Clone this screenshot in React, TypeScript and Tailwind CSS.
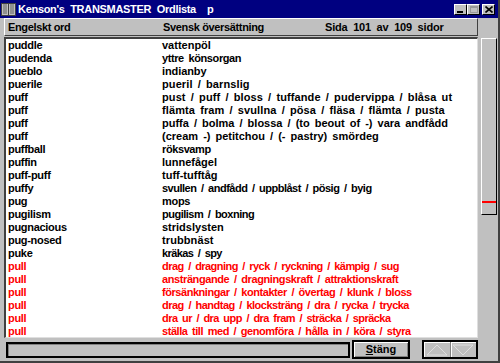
import React from "react";

type Row = { en: string; sv: string; fit: string; hit?: boolean };

// fit = letter-spacing so each line ends where the original bitmap font ends
const rows: Row[] = [
  { en: "puddle", sv: "vattenpöl", fit: "tracking-[0px]" },
  { en: "pudenda", sv: "yttre könsorgan", fit: "tracking-[-0.4px]" },
  { en: "pueblo", sv: "indianby", fit: "tracking-[-0.1px]" },
  { en: "puerile", sv: "pueril / barnslig", fit: "tracking-[0.1px]" },
  { en: "puff", sv: "pust / puff / bloss / tuffande / pudervippa / blåsa ut", fit: "tracking-[0.1px]" },
  { en: "puff", sv: "flämta fram / svullna / pösa / fläsa / flämta / pusta", fit: "tracking-[0.1px]" },
  { en: "puff", sv: "puffa / bolma / blossa / (to beout of -) vara andfådd", fit: "tracking-[0px]" },
  { en: "puff", sv: "(cream -) petitchou / (- pastry) smördeg", fit: "tracking-[0px]" },
  { en: "puffball", sv: "röksvamp", fit: "tracking-[-0.4px]" },
  { en: "puffin", sv: "lunnefågel", fit: "tracking-[0px]" },
  { en: "puff-puff", sv: "tuff-tufftåg", fit: "tracking-[0px]" },
  { en: "puffy", sv: "svullen / andfådd / uppblåst / pösig / byig", fit: "tracking-[-0.5px]" },
  { en: "pug", sv: "mops", fit: "tracking-[-0.3px]" },
  { en: "pugilism", sv: "pugilism / boxning", fit: "tracking-[-0.5px]" },
  { en: "pugnacious", sv: "stridslysten", fit: "tracking-[0px]" },
  { en: "pug-nosed", sv: "trubbnäst", fit: "tracking-[0.1px]" },
  { en: "puke", sv: "kräkas / spy", fit: "tracking-[-0.6px]" },
  { en: "pull", sv: "drag / dragning / ryck / ryckning / kämpig / sug", fit: "tracking-[-0.55px]", hit: true },
  { en: "pull", sv: "ansträngande / dragningskraft / attraktionskraft", fit: "tracking-[-0.4px]", hit: true },
  { en: "pull", sv: "försänkningar / kontakter / övertag / klunk / bloss", fit: "tracking-[-0.45px]", hit: true },
  { en: "pull", sv: "drag / handtag / klocksträng / dra / rycka / trycka", fit: "tracking-[-0.5px]", hit: true },
  { en: "pull", sv: "dra ur / dra upp / dra fram / sträcka / spräcka", fit: "tracking-[-0.55px]", hit: true },
  { en: "pull", sv: "ställa till med / genomföra / hålla in / köra / styra", fit: "tracking-[-0.45px]", hit: true },
];

// page 101 of 109
const position = 101 / 109;

function TitleButton({ children }: { children: React.ReactNode }) {
  return (
    <div className="w-[13px] h-[11px] bg-[#c0c0c0] border border-t-white border-l-white border-r-black border-b-black flex items-center justify-center">
      {children}
    </div>
  );
}

export default function App() {
  return (
    <div
      className="w-[500px] h-[363px] bg-[#c0c0c0] flex flex-col border-r-2 border-b-2 border-r-[#404040] border-b-[#404040] overflow-hidden text-black"
      style={{ fontFamily: '"Liberation Sans", Arial, sans-serif' }}
    >
      {/* Title bar */}
      <div className="h-[18px] bg-[#000080] flex items-center shrink-0">
        <svg width="15" height="15" viewBox="0 0 15 15" className="ml-[1px]">
          <rect x="0" y="1" width="15" height="13" fill="#c0c0c0" />
          <rect x="7" y="1" width="1" height="13" fill="#404040" />
          <path d="M2 3h4M2 5h4M2 7h4M2 9h4M2 11h4M9 3h4M9 5h4M9 7h4M9 9h4M9 11h4" stroke="#606060" strokeWidth="1" />
          <rect x="0.5" y="1.5" width="14" height="12" fill="none" stroke="#404040" />
        </svg>
        <span className="ml-[2px] text-white font-bold text-[11px] whitespace-pre tracking-[-0.3px]">
          {"Kenson's  TRANSMASTER  Ordlista    p"}
        </span>
        <div className="ml-auto flex items-center mr-[3px]">
          <TitleButton>
            <div className="w-[6px] h-[2px] bg-black mt-[5px] -ml-[1px]" />
          </TitleButton>
          <TitleButton>
            <div className="w-[8px] h-[7px] border border-t-2 border-black opacity-20" />
          </TitleButton>
          <div className="w-[2px]" />
          <TitleButton>
            <svg width="8" height="7" viewBox="0 0 8 7">
              <path d="M0.5 0.5L7.5 6.5M7.5 0.5L0.5 6.5" stroke="black" strokeWidth="1.6" />
            </svg>
          </TitleButton>
        </div>
      </div>

      {/* Body */}
      <div className="flex flex-1 min-h-0">
        <div className="w-[478px] pl-[4px] flex flex-col">
          {/* Column header */}
          <div className="h-[18px] border border-t-white border-l-white border-r-[#404040] border-b-[#404040] flex items-center text-[11px] font-bold whitespace-pre">
            <span className="w-[158px] pl-[3px] tracking-[-0.35px]">Engelskt ord</span>
            <span className="w-[162px] tracking-[-0.35px]">Svensk översättning</span>
            <span className="tracking-[-0.2px]">{"Sida  101  av  109  sidor"}</span>
          </div>

          {/* Word list */}
          <div className="mt-[1px] h-[301px] bg-white border-t-2 border-l-2 border-t-[#404040] border-l-[#404040] border-b border-r border-b-[#dfdfdf] border-r-[#dfdfdf] overflow-hidden">
            {rows.map((r, i) => (
              <div
                key={i}
                className={`flex h-[13px] leading-[13px] text-[11px] font-bold whitespace-nowrap ${
                  r.hit ? "text-[#ff0000]" : "text-black"
                }`}
              >
                <span className="w-[156px] pl-[2px] tracking-[-0.3px]">{r.en}</span>
                <span className={`${r.fit} [word-spacing:2px]`}>{r.sv}</span>
              </div>
            ))}
          </div>

          {/* Bottom bar */}
          <div className="mt-[2px] flex items-center h-[19px]">
            <div className="ml-[2px] w-[344px] h-[16px] border-2 border-black bg-[#c0c0c0] shadow-[inset_1px_1px_0_#808080]" />
            <button className="ml-[2px] w-[58px] h-[19px] border-2 border-black bg-[#c0c0c0] shadow-[inset_1px_1px_0_white,inset_-1px_-1px_0_#808080] text-[11px] font-bold flex items-center justify-center">
              <span className="underline underline-offset-1">S</span>täng
            </button>
            <div className="ml-[12px] flex h-[19px] w-[56px] border-2 border-black">
              <div className="flex-1 flex items-center justify-center border-r border-[#808080] shadow-[inset_1px_1px_0_white]">
                <svg width="22" height="12" viewBox="0 0 22 12">
                  <path d="M1 11L11 1L21 11Z" fill="none" stroke="#dfdfdf" />
                </svg>
              </div>
              <div className="flex-1 flex items-center justify-center shadow-[inset_1px_1px_0_white]">
                <svg width="22" height="12" viewBox="0 0 22 12">
                  <path d="M1 1L11 11L21 1Z" fill="none" stroke="#dfdfdf" />
                </svg>
              </div>
            </div>
          </div>
        </div>

        {/* Position indicator */}
        <div className="flex-1 pl-[3px]">
          <div className="mt-[20px] w-[16px] h-[177px] border border-t-white border-l-white border-r-black border-b-black relative">
            <div
              className="absolute left-0 right-0 h-[2px] bg-[#ff0000]"
              style={{ top: `${Math.round(position * 177) - 2}px` }}
            />
          </div>
        </div>
      </div>
    </div>
  );
}
